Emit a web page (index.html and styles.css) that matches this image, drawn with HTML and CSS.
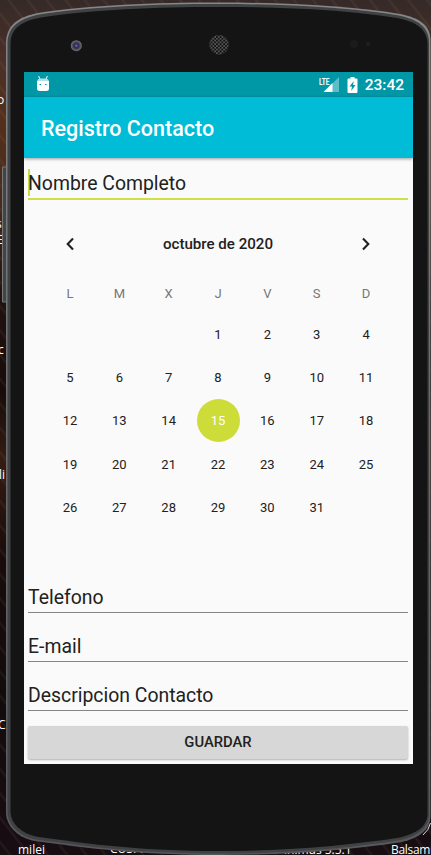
FILE: index.html
```html
<!DOCTYPE html>
<html lang="es">
<head>
<meta charset="utf-8">
<title>Registro Contacto</title>
<link rel="stylesheet" href="styles.css">
</head>
<body>
<div class="desktop">
  <span class="label l1">o</span>
  <span class="label l2">s</span>
  <span class="label l3">E</span>
  <span class="label l4">c</span>
  <span class="label l5">li</span>
  <span class="label l6">C</span>
  <span class="label l7">milei</span>
  <span class="label l8">CUSPI</span>
  <span class="label l9">inimus 5.5.1</span>
  <span class="label l10">Balsami</span>
  <svg class="shell" width="431" height="855" viewBox="0 0 431 855" aria-hidden="true">
    <defs>
      <pattern id="mesh" width="3.6" height="3.6" patternUnits="userSpaceOnUse">
        <circle cx="1" cy="1" r="1.1" fill="#0c0c0c"/><circle cx="2.8" cy="2.8" r="1.1" fill="#0c0c0c"/>
      </pattern>
      <radialGradient id="lens"><stop offset="0" stop-color="#8582c8"/><stop offset=".3" stop-color="#2c276b"/><stop offset=".55" stop-color="#3c3c48"/><stop offset="1" stop-color="#757577"/></radialGradient>
      <linearGradient id="edge" x1="0" y1="0" x2="0" y2="1"><stop offset="0" stop-color="#85878a"/><stop offset=".5" stop-color="#696b6d"/><stop offset="1" stop-color="#55575a"/></linearGradient>
    </defs>
    <path d="M2.500 167H7V302H2.500Z" fill="#414548" stroke="#74787b" stroke-width="1"/>
    <path d="M6 42C7 24 19 17 38 13C90 5 155 2.500 218 2.500C284 2.500 350 6 400 14C420 18 430 25 430.500 40V817C430 829 420 838 402 842C350 850 290 855 218 855C140 855 85 848 32 840.500C16 836 7 826 6 814Z" fill="url(#edge)"/>
    <path d="M7.500 42C8.500 26 20 18.500 39 14.500C91 6.500 155 4 218 4C284 4 349 7.500 399 15.500C418 19.500 428.500 27 429 42V816C428 828 418 836 401 840C349 848 290 853.500 218 853.500C141 853.500 86 846.500 33 839C18 835 8.500 825 7.500 813Z" fill="#3f4143"/>
    <path d="M10.500 43C11 28 22 21 41 17.500C93 9.500 156 7 218 7C284 7 348 10 397 18C416 21.500 427 29 427.500 44V815C427 826 417 833.500 400 837.500C348 845.500 289 851 218 851C142 851 88 844 36 836.500C21 833 11 824 10.500 812Z" fill="#141414"/>
    <path d="M423 835Q429 830 430.500 823" fill="none" stroke="#ddd"/>
    <circle cx="76.300" cy="45.700" r="5.500" fill="url(#lens)"/>
    <circle cx="219" cy="44.700" r="9.700" fill="#5b5b5b"/>
    <circle cx="219" cy="44.700" r="9.700" fill="url(#mesh)"/>
    <circle cx="354" cy="44" r="4" fill="#1b1b1b"/><circle cx="368.300" cy="44" r="2.300" fill="#1e1e1e"/>
  </svg>
  <main class="screen">
    <div class="status">
      <svg class="droid" width="14" height="16" viewBox="0 0 14 16" aria-hidden="true"><path d="M2.600 0L4 3M11.400 0L10 3" stroke="#fff"/><path d="M1 5.500Q1.500 2.500 4.500 2.500H9.500Q12.500 2.500 13 5.500Z" fill="#b5e0e6"/><path d="M1 5H13V12.500Q13 15 10 15H4Q1 15 1 12.500Z" fill="#fff"/><path d="M3.500 8.500H5M9 8.500H10.500" stroke="#0097a7"/></svg>
      <div class="indicators">
        <svg width="20" height="16" viewBox="0 0 20 16" aria-hidden="true"><path d="M5 15L20 0V15Z" fill="#5fbdc7"/><path d="M4.500 15L13.500 6V15Z" fill="#fff"/><rect x="0" y="0" width="11" height="8" fill="#0097a7"/><text class="lte" x="0" y="7.500" textLength="10.500" lengthAdjust="spacingAndGlyphs">LTE</text></svg>
        <svg class="battery" width="11" height="16" viewBox="0 0 11 16" aria-hidden="true"><path d="M3.500 0H7.500V1.500H9.500Q10.500 1.500 10.500 2.500V15Q10.500 16 9.500 16H1.500Q.5 16 .5 15V2.500Q.5 1.500 1.500 1.500H3.500Z" fill="#fff"/><path d="M6.800 4L2.500 9.500H5L4.200 14L8.500 8H6Z" fill="#0097a7"/></svg>
        <span class="clock">23:42</span>
      </div>
    </div>
    <header class="appbar"><h1>Registro Contacto</h1></header>
    <form class="form">
      <div class="field focused">Nombre Completo</div>
      <section class="calendar">
        <div class="month">
          <svg width="24" height="24" viewBox="0 0 24 24" aria-hidden="true"><path d="M15 6.500L9.700 12L15 17.500"/></svg>
          <span>octubre de 2020</span>
          <svg width="24" height="24" viewBox="0 0 24 24" aria-hidden="true"><path d="M9 6.500L14.300 12L9 17.500"/></svg>
        </div>
        <div class="grid weekdays"><span>L</span><span>M</span><span>X</span><span>J</span><span>V</span><span>S</span><span>D</span></div>
        <div class="grid days">
          <span class="first">1</span><span>2</span><span>3</span><span>4</span>
          <span>5</span><span>6</span><span>7</span><span>8</span><span>9</span><span>10</span><span>11</span>
          <span>12</span><span>13</span><span>14</span><span class="selected">15</span><span>16</span><span>17</span><span>18</span>
          <span>19</span><span>20</span><span>21</span><span>22</span><span>23</span><span>24</span><span>25</span>
          <span>26</span><span>27</span><span>28</span><span>29</span><span>30</span><span>31</span>
        </div>
      </section>
      <div class="field">Telefono</div>
      <div class="field">E-mail</div>
      <div class="field">Descripcion Contacto</div>
      <button class="save" type="button">GUARDAR</button>
    </form>
  </main>
</div>
</body>
</html>
```
FILE: styles.css
```css
* { box-sizing: border-box; }
body { margin: 0; font-family: Roboto, sans-serif; color: #212121; }
.desktop {
  position: relative;
  width: 431px;
  height: 855px;
  overflow: hidden;
  padding: 72px 18px 0 24px;
  background:
    repeating-linear-gradient(52deg, transparent 0 6px, rgba(190, 160, 140, .09) 8px, transparent 10px 15px),
    linear-gradient(180deg, #352a27 0, #4b3028 60px, #54301c 120px, #492b1b 200px, #21120f 300px, #170c0a 390px, #351c12 460px, #180c0b 560px, #120b0d 700px, #180d12 855px);
}
.label {
  position: absolute;
  font: 12px/16px "Open Sans", sans-serif;
  color: #fff;
  white-space: nowrap;
}
.l1 { left: -3px; top: 92px; }
.l2 { left: -4px; top: 216px; }
.l3 { left: -4px; top: 232px; }
.l4 { left: -2px; top: 342px; }
.l5 { left: -1px; top: 467px; }
.l6 { left: -2px; top: 717px; }
.l7 { left: 18px; top: 842px; }
.l8 { left: 110px; top: 841px; }
.l9 { left: 284px; top: 842px; }
.l10 { left: 391px; top: 842px; letter-spacing: -.3px; }
.shell { position: absolute; left: 0; top: 0; }
.screen {
  position: relative;
  height: 692px;
  display: flex;
  flex-direction: column;
  background: #fafafa;
}
.status {
  flex: none;
  height: 25px;
  padding: 0 9px 0 12px;
  display: flex;
  align-items: center;
  justify-content: space-between;
  background: #0097a7;
  color: #fff;
}
.droid { margin-top: -2px; }
.indicators { display: flex; align-items: center; }
.battery { margin: 0 7px 0 8px; }
.lte { font: 700 9px Roboto, sans-serif; fill: #fff; }
.clock { font-size: 15.5px; line-height: 25px; font-weight: 500; padding-top: 2px; }
.appbar {
  flex: none;
  height: 61px;
  padding: 2px 17px 0;
  display: flex;
  align-items: center;
  background: #00bcd7;
  box-shadow: 0 1px 3px rgba(0, 0, 0, .38);
}
h1 { margin: 0; font-size: 21.5px; font-weight: 500; color: #fff; }
.form { padding: 11px 5px 0 4px; display: flex; flex-direction: column; }
.field {
  height: 34px;
  margin-bottom: 15px;
  border-bottom: 1px solid #858585;
  font-size: 19.4px;
  line-height: 38px;
}
.focused {
  height: 31px;
  margin-bottom: 0;
  border-bottom: 2px solid #cfdf45;
  line-height: 29px;
  background: linear-gradient(#cddc39, #cddc39) 0 0 / 2px 27px no-repeat;
}
.calendar { height: 379px; padding: 28px 17.300px 0; }
.month {
  display: flex;
  align-items: center;
  justify-content: space-between;
  height: 32px;
  padding: 0 12.500px;
  font-size: 15.1px;
  font-weight: 500;
}
.month svg { fill: none; stroke: #212121; stroke-width: 2.1; }
.grid { display: grid; grid-template-columns: repeat(7, 1fr); justify-items: center; }
.grid span { display: flex; align-items: center; justify-content: center; }
.weekdays { margin-top: 18px; height: 30px; font-size: 13px; color: #777; }
.days { margin-top: 5px; grid-auto-rows: 43.200px; font-size: 13px; }
.days span { width: 43px; height: 43px; }
.first { grid-column: 4; }
.days .selected { background: #cddc39; color: #fff; border-radius: 50%; }
.save {
  height: 33px;
  padding: 0 0 1px;
  border: 0;
  border-radius: 2px;
  background: #d7d7d7;
  box-shadow: 0 1px 2px rgba(0, 0, 0, .3);
  font: 500 14.8px Roboto, sans-serif;
  color: #212121;
}
```
